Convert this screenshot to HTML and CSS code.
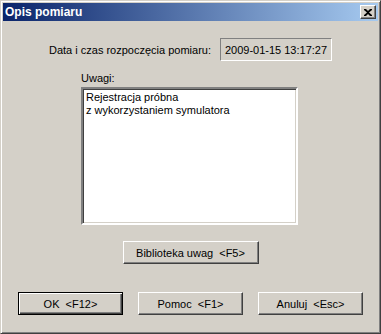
FILE: index.html
```html
<!DOCTYPE html>
<html lang="pl">
<head>
  <meta charset="UTF-8" />
  <title>Opis pomiaru</title>
  <link rel="stylesheet" href="styles.css">
</head>
<body>
  <div class="window">
    <div class="titlebar">
      <span class="title">Opis pomiaru</span>
      <div class="close-btn">
        <svg width="8" height="7" viewBox="0 0 8 7">
          <path d="M0 0h2l2 2 2-2h2v1l-3 2.5 3 2.5v1h-2l-2-2-2 2h-2v-1l3-2.5-3-2.5z" fill="#000"/>
        </svg>
      </div>
    </div>

    <div class="client">
      <div class="date-row">
        <span class="label">Data i czas rozpoczęcia pomiaru:</span>
        <div class="static-box">2009-01-15 13:17:27</div>
      </div>

      <div class="notes">
        <span class="label">Uwagi:</span>
        <div class="textbox">Rejestracja próbna<br>z wykorzystaniem symulatora</div>
      </div>

      <div class="library-row">
        <button class="btn btn-library">Biblioteka uwag &nbsp;&lt;F5&gt;</button>
      </div>

      <div class="button-row">
        <button class="btn btn-default">OK &nbsp;&lt;F12&gt;</button>
        <button class="btn">Pomoc &nbsp;&lt;F1&gt;</button>
        <button class="btn">Anuluj &nbsp;&lt;Esc&gt;</button>
      </div>
    </div>
  </div>
</body>
</html>
```

FILE: styles.css
```css
/* Classic dialog look */
body {
  margin: 0;
  padding: 0;
  font-family: "Liberation Sans", Arial, sans-serif;
  font-size: 11px;
  color: #000;
  background: #d4d0c8;
}

.window {
  width: 381px;
  height: 334px;
  box-sizing: border-box;
  border: 1px solid;
  border-color: #d4d0c8 #404040 #404040 #d4d0c8;
  box-shadow: inset 1px 1px #ffffff, inset -1px -1px #808080;
  padding: 2px;
  background: #d4d0c8;
  display: flex;
  flex-direction: column;
}

/* Title bar */
.titlebar {
  height: 18px;
  display: flex;
  align-items: center;
  justify-content: space-between;
  padding: 0 2px 0 2px;
  background: linear-gradient(to right, #0a246a, #a6caf0);
}

.title {
  color: #fff;
  font-weight: bold;
  font-size: 12px;
}

.close-btn {
  width: 16px;
  height: 14px;
  box-sizing: border-box;
  border: 1px solid;
  border-color: #fff #404040 #404040 #fff;
  box-shadow: inset -1px -1px #808080;
  background: #d4d0c8;
  display: flex;
  align-items: center;
  justify-content: center;
}

/* Client area */
.client {
  flex: 1;
  display: flex;
  flex-direction: column;
}

.date-row {
  display: flex;
  justify-content: center;
  align-items: center;
  gap: 9px;
  margin-top: 17px;
}

.static-box {
  width: 112px;
  height: 23px;
  box-sizing: border-box;
  border: 1px solid;
  border-color: #808080 #fff #fff #808080;
  display: flex;
  align-items: center;
  justify-content: center;
}

.notes {
  margin: 11px 0 0 78px;
  display: flex;
  flex-direction: column;
  gap: 3px;
}

.textbox {
  width: 217px;
  height: 138px;
  box-sizing: border-box;
  border: 2px solid;
  border-color: #808080 #fff #fff #808080;
  box-shadow: inset 1px 1px #404040, inset -1px -1px #d4d0c8;
  background: #fff;
  padding: 2px 3px;
  line-height: 13px;
}

.library-row {
  display: flex;
  justify-content: center;
  margin-top: 16px;
}

/* Buttons */
.btn {
  height: 23px;
  box-sizing: border-box;
  font-family: "Liberation Sans", Arial, sans-serif;
  font-size: 11px;
  color: #000;
  background: #d4d0c8;
  border: 1px solid;
  border-color: #fff #404040 #404040 #fff;
  box-shadow: inset -1px -1px #808080, inset 1px 1px #d4d0c8;
  padding: 0;
  margin: 0;
}

.btn-library {
  width: 136px;
}

.button-row {
  display: flex;
  justify-content: center;
  gap: 15px;
  margin-top: 28px;
}

.button-row .btn {
  width: 105px;
}

.btn-default {
  border: 1px solid #000;
  box-shadow: inset 1px 1px #fff, inset -1px -1px #404040, inset -2px -2px #808080;
}
```
